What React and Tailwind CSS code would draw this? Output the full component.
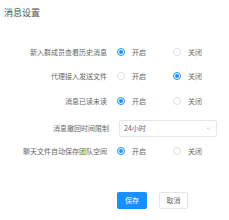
import React, { useState } from 'react';

const font = { fontFamily: '"Noto Sans CJK SC", "Noto Sans", sans-serif' };

function Radio({ checked, label, onClick }) {
    return (
        <div className="w-[56px] flex items-center cursor-pointer" onClick={onClick}>
            <span
                className={`w-[8px] h-[8px] rounded-full border flex items-center justify-center ${
                    checked ? 'border-[#1890ff]' : 'border-[#e0e0e0]'
                }`}
            >
                {checked && <span className="w-[4px] h-[4px] rounded-full bg-[#1890ff]" />}
            </span>
            <span className="ml-[7px] text-[7px] text-[#666]">{label}</span>
        </div>
    );
}

function RadioRow({ label, value, onChange, className }) {
    return (
        <div className={`flex items-center h-4 ${className}`}>
            <div className="w-[109px] text-right text-[7px] text-[#666]">{label}</div>
            <div className="ml-[10px] flex">
                <Radio checked={value} label="开启" onClick={() => onChange(true)} />
                <Radio checked={!value} label="关闭" onClick={() => onChange(false)} />
            </div>
        </div>
    );
}

export default function App() {
    const [settings, setSettings] = useState({ history: true, proxy: false, read: true, autosave: true });

    function set(key) {
        return (v) => setSettings({ ...settings, [key]: v });
    }

    return (
        <div className="w-[229px] h-[220px] bg-white" style={font}>
            <div className="pt-[7px] pl-[4px] text-[9px] leading-[12px] text-[#555]">消息设置</div>

            <RadioRow className="mt-[25px]" label="新入群成员查看历史消息" value={settings.history} onChange={set('history')} />
            <RadioRow className="mt-[8px]" label="代理接入发送文件" value={settings.proxy} onChange={set('proxy')} />
            <RadioRow className="mt-[9px]" label="消息已读未读" value={settings.read} onChange={set('read')} />

            <div className="flex items-center h-[17px] mt-[11px]">
                <div className="w-[109px] text-right text-[7px] text-[#666]">消息撤回时间限制</div>
                <div className="ml-[10px] w-[98px] h-[17px] border border-[#e6e6e6] rounded-[2px] flex items-center justify-between pl-[4px] pr-[5px]">
                    <span className="text-[7px] text-[#666]">24小时</span>
                    <svg width="5" height="3" viewBox="0 0 5 3" fill="none">
                        <path d="M0.5 0.5 L2.5 2.5 L4.5 0.5" stroke="#bbb" strokeWidth="0.7" />
                    </svg>
                </div>
            </div>

            <RadioRow className="mt-[6px]" label="聊天文件自动保存团队空间" value={settings.autosave} onChange={set('autosave')} />

            <div className="flex mt-[33px] pl-[117px] gap-[12px]">
                <button className="w-[30px] h-[17px] bg-[#1890ff] rounded-[2px] text-white text-[7px]">保存</button>
                <button className="w-[29px] h-[17px] border border-[#e6e6e6] rounded-[2px] text-[#666] text-[7px] bg-white">取消</button>
            </div>
        </div>
    );
}
